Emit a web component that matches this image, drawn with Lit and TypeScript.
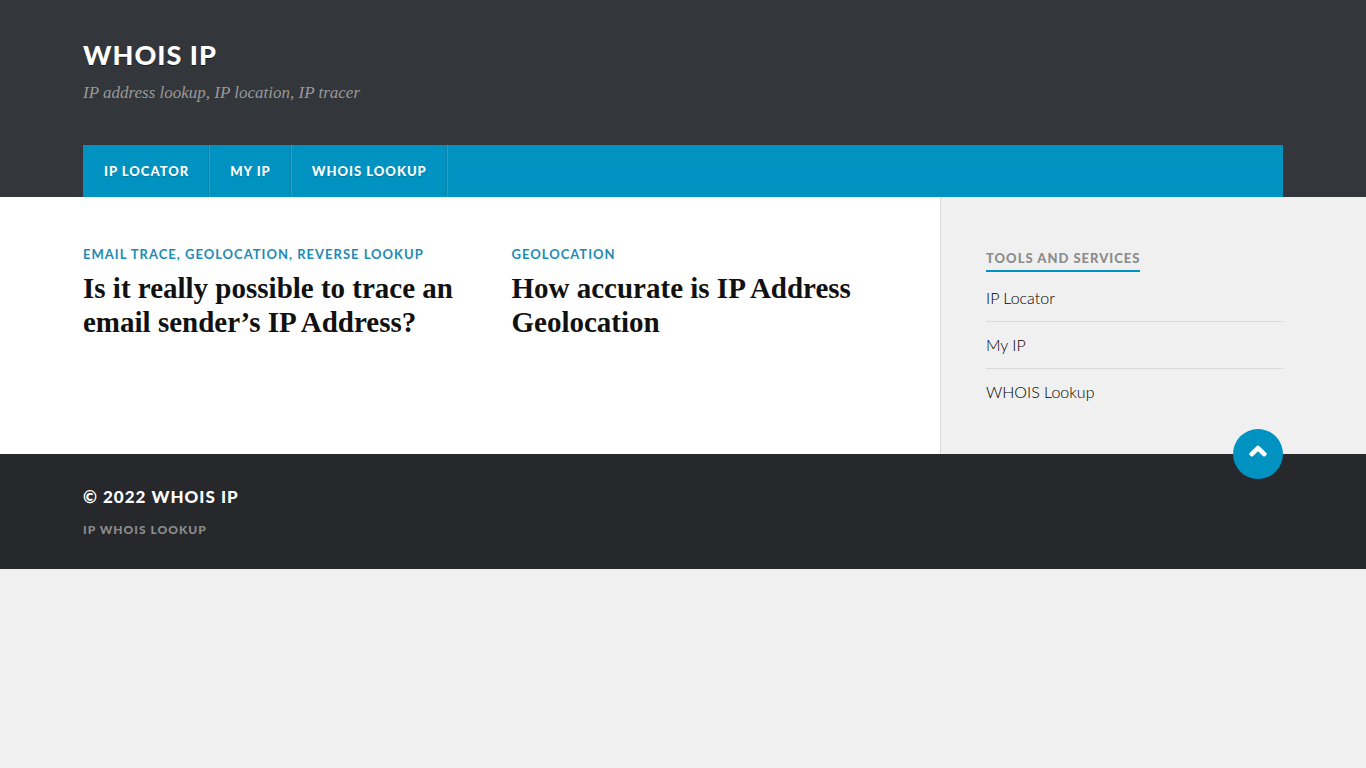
import { LitElement, html, css } from "lit";
import { customElement } from "lit/decorators.js";

interface Post {
  categories: string[];
  title: string;
}

const TOOLS = ["IP Locator", "My IP", "WHOIS Lookup"];

const POSTS: Post[] = [
  {
    categories: ["Email Trace", "Geolocation", "Reverse Lookup"],
    title: "Is it really possible to trace an email sender’s IP Address?",
  },
  { categories: ["Geolocation"], title: "How accurate is IP Address Geolocation" },
];

@customElement("app-root")
export class AppRoot extends LitElement {
  static styles = css`
    :host {
      --gutter: max(24px, calc((100vw - 1200px) / 2));
      --accent: #0093c2;
      --heavy: "Lato Black", Lato, "Liberation Sans", sans-serif;
      display: block;
      min-height: 100vh;
      background: #f0f0f0;
      color: #111;
      font-family: Lato, "Liberation Sans", sans-serif;
    }
    * {
      box-sizing: border-box;
    }
    h1, h2, h3, p, ul {
      margin: 0;
      padding: 0;
    }
    ul {
      list-style: none;
    }
    a {
      color: inherit;
      text-decoration: none;
    }
    .header {
      background: #33363b;
      padding: 38px var(--gutter) 0;
    }
    .site-title {
      font: 900 27px/34px var(--heavy);
      letter-spacing: 1px;
      text-transform: uppercase;
      color: #fff;
      text-shadow: 0 1px 0 rgba(0, 0, 0, 0.5);
    }
    .tagline {
      margin-top: 9px;
      font: italic 17px/24px "Liberation Serif", serif;
      color: #999;
    }
    .nav {
      margin-top: 40px;
      background: var(--accent);
    }
    .menu {
      display: flex;
      flex-wrap: wrap;
    }
    .menu-link {
      display: block;
      padding: 16px 19px 16px 21px;
      border-right: 1px solid #0a86af;
      box-shadow: 1px 0 0 #1ea3cf;
      font: 900 13px/20px var(--heavy);
      letter-spacing: 1px;
      text-transform: uppercase;
      color: #fff;
      text-shadow: 0 1px 0 rgba(0, 0, 0, 0.2);
    }
    .main {
      display: flex;
    }
    .posts {
      flex: 1;
      min-width: 0;
      display: grid;
      grid-template-columns: 1fr 1fr;
      align-content: start;
      padding: 47px 0 45px var(--gutter);
      background: #fff;
    }
    .post {
      padding-right: 45px;
    }
    .categories {
      font-size: 13px;
      line-height: 20px;
      font-weight: 700;
      letter-spacing: 1px;
      text-transform: uppercase;
      color: #1e8bb5;
    }
    .post-title {
      margin-top: 7px;
      font: bold 29px/34px "Liberation Serif", serif;
    }
    .sidebar {
      flex: none;
      width: calc(343px + var(--gutter));
      padding: 51px var(--gutter) 39px 45px;
      border-left: 1px solid #d9d9d9;
    }
    .widget-title {
      width: fit-content;
      padding-bottom: 2px;
      border-bottom: 2px solid var(--accent);
      font: 900 13px/20px var(--heavy);
      letter-spacing: 1px;
      text-transform: uppercase;
      color: #8c8c8c;
    }
    .tools {
      margin-top: 3px;
    }
    .tool {
      padding: 11px 0;
      border-bottom: 1px solid #dadada;
      color: #000;
      font: 300 16px/24px "Lato Light", Lato, "Liberation Sans", sans-serif;
    }
    .tool:last-child {
      border-bottom: 0;
    }
    .footer {
      position: relative;
      padding: 31px var(--gutter) 30px;
      background: #26282b;
      text-transform: uppercase;
    }
    .copyright {
      font: 900 17px/24px var(--heavy);
      letter-spacing: 1px;
      color: #fff;
    }
    .footer-note {
      margin-top: 12px;
      font: 900 12px/18px var(--heavy);
      letter-spacing: 1px;
      color: #8c8c8c;
    }
    .to-top {
      position: absolute;
      top: -25px;
      right: var(--gutter);
      display: grid;
      place-items: center;
      width: 50px;
      height: 50px;
      padding: 0;
      border: 0;
      border-radius: 50%;
      background: var(--accent);
      cursor: pointer;
    }
    .chevron {
      display: block;
      width: 20px;
      height: 20px;
      margin-bottom: 4px;
    }
    @media (max-width: 800px) {
      .main {
        flex-direction: column;
      }
      .posts {
        grid-template-columns: 1fr;
        gap: 32px;
      }
      .sidebar {
        width: auto;
        padding-left: var(--gutter);
        border-left: 0;
      }
    }
  `;

  private toTop() {
    window.scrollTo({ top: 0, behavior: "smooth" });
  }

  render() {
    return html`
      <header class="header">
        <h1 class="site-title"><a href="#">Whois IP</a></h1>
        <p class="tagline">IP address lookup, IP location, IP tracer</p>
        <nav class="nav" aria-label="Main">
          <ul class="menu">
            ${TOOLS.map((t) => html`<li><a class="menu-link" href="#">${t}</a></li>`)}
          </ul>
        </nav>
      </header>
      <div class="main">
        <main class="posts">
          ${POSTS.map(
            (post) => html`<article class="post">
              <p class="categories">
                ${post.categories.map((c, i) => html`${i ? ", " : ""}<a href="#">${c}</a>`)}
              </p>
              <h2 class="post-title"><a href="#">${post.title}</a></h2>
            </article>`
          )}
        </main>
        <aside class="sidebar">
          <h3 class="widget-title">Tools and services</h3>
          <ul class="tools">
            ${TOOLS.map((t) => html`<li class="tool"><a href="#">${t}</a></li>`)}
          </ul>
        </aside>
      </div>
      <footer class="footer">
        <p class="copyright">© 2022 <a href="#">Whois IP</a></p>
        <p class="footer-note">IP Whois Lookup</p>
        <button class="to-top" type="button" aria-label="Back to top" @click=${this.toTop}>
          <svg class="chevron" viewBox="0 0 20 20" aria-hidden="true">
            <path d="M10 3.6 Q10.8 3.6 11.4 4.2 L18.4 11 Q19.3 12 18.4 13 L17.2 14.2 Q16.2 15 15.2 14.2 L10 9.2 4.8 14.2 Q3.8 15 2.8 14.2 L1.6 13 Q0.7 12 1.6 11 L8.6 4.2 Q9.2 3.6 10 3.6 Z" fill="#fff" />
          </svg>
        </button>
      </footer>
    `;
  }
}
